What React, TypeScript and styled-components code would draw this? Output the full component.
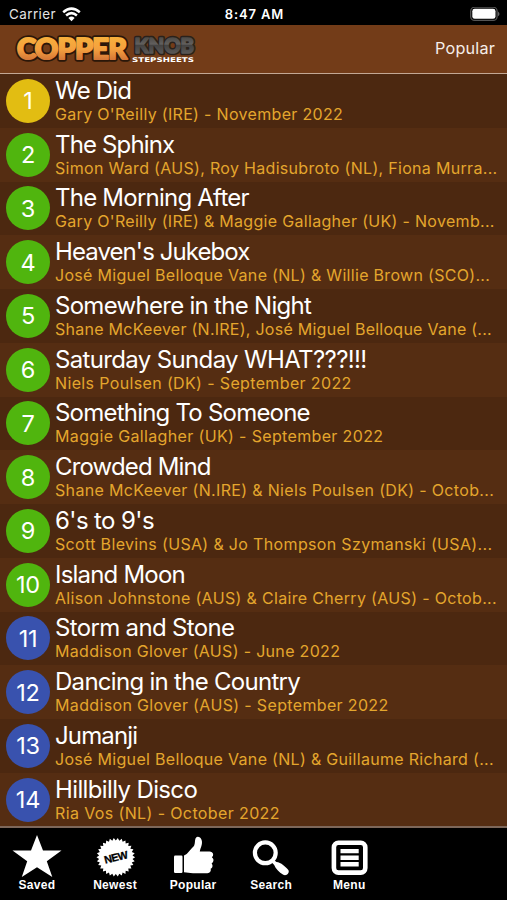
import React from "react";
import styled, { createGlobalStyle } from "styled-components";

const GlobalStyle = createGlobalStyle`
  body { margin: 0; background: #000; }
  *, *::before, *::after { box-sizing: border-box; }
`;

const Screen = styled.div`
  width: 507px;
  height: 900px;
  display: flex;
  flex-direction: column;
  overflow: hidden;
  background: #000;
  color: #fff;
  font-family: Inter, "Liberation Sans", sans-serif;
`;

const StatusBar = styled.div`
  flex: none;
  height: 25px;
  padding: 3px 7px 0 9px;
  display: grid;
  grid-template-columns: 1fr auto 1fr;
  align-items: center;
`;

const Carrier = styled.div`
  display: flex;
  align-items: center;
  gap: 6px;
  font-size: 13.4px;
  letter-spacing: 0.45px;
  color: #e4e4e4;
`;

const Clock = styled.div`
  font-size: 13px;
  font-weight: 600;
  letter-spacing: 0.85px;
`;

const BatterySlot = styled.div`
  display: flex;
  justify-content: flex-end;
`;

const Header = styled.header`
  flex: none;
  height: 49px;
  padding: 0 12px 3px 12px;
  display: flex;
  align-items: center;
  justify-content: space-between;
  background: #733c18;
  border-bottom: 1px solid #c3a894;
`;

const HeaderAction = styled.div`
  font-size: 16.2px;
  letter-spacing: 0.2px;
  color: #f6eee9;
`;

const List = styled.ol`
  flex: 1;
  min-height: 0;
  margin: 0;
  padding: 0;
  list-style: none;
  overflow: hidden;
  background: #4c2810;
`;

const Row = styled.li`
  height: 53.76px;
  padding-left: 6px;
  display: flex;
  align-items: center;
  gap: 5px;
  background: #4c2810;
  &:nth-child(even) { background: #552d12; }
`;

const Rank = styled.div<{ $color: string }>`
  flex: none;
  width: 44px;
  height: 44px;
  border-radius: 50%;
  display: flex;
  align-items: center;
  justify-content: center;
  font-size: 23.5px;
  letter-spacing: -0.2px;
  background: ${(p) => p.$color};
`;

const Details = styled.div`
  display: flex;
  flex-direction: column;
  padding-top: 0.5px;
  white-space: nowrap;
`;

const Title = styled.div<{ $tracking: number }>`
  font-size: 24px;
  line-height: 27px;
  letter-spacing: ${(p) => p.$tracking}px;
`;

const Credits = styled.div<{ $tracking: number }>`
  font-size: 16px;
  line-height: 21.4px;
  letter-spacing: ${(p) => p.$tracking}px;
  color: #e4a62d;
`;

const TabBar = styled.nav`
  flex: none;
  height: 74px;
  padding-top: 7px;
  display: flex;
  border-top: 2px solid #7d675a;
  background: #000;
`;

const Tab = styled.div`
  width: 78.1px;
  display: flex;
  flex-direction: column;
  align-items: center;
  &:first-child { width: 76px; padding-right: 2px; }
`;

const TabLabel = styled.div`
  font-family: "Liberation Sans", Arial, sans-serif;
  font-size: 12px;
  font-weight: 700;
  line-height: 14px;
  letter-spacing: 0.3px;
`;

const GOLD = "#e2bd12";
const GREEN = "#50b50e";
const BLUE = "#3952ae";

type Dance = { title: string; credits: string; color: string; titleTracking: number; creditsTracking: number };

const dances: Dance[] = [
  { title: "We Did", credits: "Gary O'Reilly (IRE) - November 2022", color: GOLD, titleTracking: -0.8, creditsTracking: 0.32 },
  { title: "The Sphinx", credits: "Simon Ward (AUS), Roy Hadisubroto (NL), Fiona Murra...", color: GREEN, titleTracking: -0.85, creditsTracking: 0.31 },
  { title: "The Morning After", credits: "Gary O'Reilly (IRE) & Maggie Gallagher (UK) - Novemb...", color: GREEN, titleTracking: -0.77, creditsTracking: 0.31 },
  { title: "Heaven's Jukebox", credits: "José Miguel Belloque Vane (NL) & Willie Brown (SCO)...", color: GREEN, titleTracking: -0.92, creditsTracking: 0.31 },
  { title: "Somewhere in the Night", credits: "Shane McKeever (N.IRE), José Miguel Belloque Vane (...", color: GREEN, titleTracking: -0.71, creditsTracking: 0.26 },
  { title: "Saturday Sunday WHAT???!!!", credits: "Niels Poulsen (DK) - September 2022", color: GREEN, titleTracking: -0.65, creditsTracking: 0.36 },
  { title: "Something To Someone", credits: "Maggie Gallagher (UK) - September 2022", color: GREEN, titleTracking: -0.78, creditsTracking: 0.35 },
  { title: "Crowded Mind", credits: "Shane McKeever (N.IRE) & Niels Poulsen (DK) - Octob...", color: GREEN, titleTracking: -0.85, creditsTracking: 0.33 },
  { title: "6's to 9's", credits: "Scott Blevins (USA) & Jo Thompson Szymanski (USA)...", color: GREEN, titleTracking: -0.6, creditsTracking: 0.34 },
  { title: "Island Moon", credits: "Alison Johnstone (AUS) & Claire Cherry (AUS) - Octob...", color: GREEN, titleTracking: -0.8, creditsTracking: 0.33 },
  { title: "Storm and Stone", credits: "Maddison Glover (AUS) - June 2022", color: BLUE, titleTracking: -0.67, creditsTracking: 0.32 },
  { title: "Dancing in the Country", credits: "Maddison Glover (AUS) - September 2022", color: BLUE, titleTracking: -0.71, creditsTracking: 0.35 },
  { title: "Jumanji", credits: "José Miguel Belloque Vane (NL) & Guillaume Richard (...", color: BLUE, titleTracking: -0.87, creditsTracking: 0.31 },
  { title: "Hillbilly Disco", credits: "Ria Vos (NL) - October 2022", color: BLUE, titleTracking: -0.63, creditsTracking: 0.38 },
];

const WifiIcon = () => (
  <svg width="19" height="15" viewBox="0 0 19 15" fill="none" stroke="#fff" strokeWidth="2.5">
    <path d="M1.2 5.3Q9.5-2 17.8 5.3" />
    <path d="M4.1 8.5Q9.5 3.8 14.9 8.5" />
    <path d="M9.5 14.2 6.4 10.9Q9.5 8.3 12.6 10.9Z" fill="#fff" stroke="none" />
  </svg>
);

const BatteryIcon = () => (
  <svg width="30" height="15" viewBox="0 0 30 15">
    <rect x="0.7" y="0.2" width="26.4" height="13.2" rx="4" fill="none" stroke="#555" strokeWidth="1.3" />
    <rect x="2.3" y="1.8" width="23.2" height="10" rx="2.4" fill="#fff" />
    <path d="M28 4.5Q31 6.9 28 9.3Z" fill="#666" />
  </svg>
);

const LogoText = styled.text`
  font-family: Lato, sans-serif;
  font-weight: 900;
  stroke-linejoin: round;
  paint-order: stroke;
`;

const Logo = () => (
  <svg width="188" height="38" viewBox="0 0 188 38">
    <defs>
      <linearGradient id="copper" x1="0" y1="0" x2="0" y2="1">
        <stop offset="0.15" stopColor="#f7b23c" />
        <stop offset="0.55" stopColor="#f4a03e" />
        <stop offset="0.9" stopColor="#cf7037" />
      </linearGradient>
      <linearGradient id="iron" x1="0" y1="0" x2="0" y2="1">
        <stop offset="0.2" stopColor="#4a4744" />
        <stop offset="0.5" stopColor="#62605e" />
        <stop offset="0.55" stopColor="#444342" />
        <stop offset="0.9" stopColor="#5b5958" />
      </linearGradient>
    </defs>
    <LogoText x="5" y="30" fontSize="29" textLength="110" lengthAdjust="spacing" fill="none" stroke="#2b1709" strokeWidth="5.6">COPPER</LogoText>
    <LogoText x="5" y="30" fontSize="29" textLength="110" lengthAdjust="spacing" fill="url(#copper)" stroke="url(#copper)" strokeWidth="2">COPPER</LogoText>
    <LogoText x="122.5" y="23.6" fontSize="21" textLength="59.5" lengthAdjust="spacingAndGlyphs" fill="none" stroke="#2a211b" strokeWidth="4.6">KNOB</LogoText>
    <LogoText x="122.5" y="23.6" fontSize="21" textLength="59.5" lengthAdjust="spacingAndGlyphs" fill="url(#iron)" stroke="url(#iron)" strokeWidth="1.6">KNOB</LogoText>
    <text x="120" y="33.2" fontFamily="DejaVu Sans, sans-serif" fontWeight="700" fontSize="6.4" textLength="62" lengthAdjust="spacingAndGlyphs" fill="#fff">STEPSHEETS</text>
  </svg>
);

const StarIcon = () => (
  <svg width="50" height="43" viewBox="0 0 50 43">
    <path d="M25 0 31 15.5 49.5 15.5 34.8 26.2 40.3 42 25 32.3 9.8 42 15.2 26.2 .5 15.5 19 15.5Z" fill="#fff" />
  </svg>
);

const sealPoints = Array.from({ length: 60 }, (_, i) => {
  const r = i % 2 ? 16.8 : 19.3;
  const a = (i * Math.PI) / 30;
  return `${(25.8 + r * Math.cos(a)).toFixed(2)},${(22.2 + r * Math.sin(a)).toFixed(2)}`;
}).join(" ");

const NewIcon = () => (
  <svg width="50" height="43" viewBox="0 0 50 43">
    <polygon points={sealPoints} fill="#fff" />
    <text x="26" y="26" textAnchor="middle" transform="rotate(-14 26 22.2)" fontFamily="Liberation Sans, sans-serif" fontWeight="700" fontSize="10.8" textLength="24" fill="#000" stroke="#000" strokeWidth="0.3">NEW</text>
  </svg>
);

const ThumbIcon = () => (
  <svg width="50" height="43" viewBox="0 0 50 43" fill="#fff">
    <rect x="6" y="20.5" width="8.5" height="17.5" rx="1.2" />
    <path d="M16 20.5C20 19 22 14.5 25.5 11.5 27.5 9.5 26.5 5 27.8 3 29.5.7 32.5 2.2 33.6 5 35 9 32.3 13 31.8 16.5H41.5C45.5 16.5 46.2 20.7 43.8 22.3 46.3 23.8 45.8 27.3 43.6 28.4 45.4 30.5 44.3 33.2 42.6 33.8 43.4 36 42 38.2 39.4 38.2H25C21.5 38.2 19 37.2 16 37.2Z" />
  </svg>
);

const SearchIcon = () => (
  <svg width="50" height="43" viewBox="0 0 50 43">
    <circle cx="19.3" cy="17.8" r="10.4" fill="none" stroke="#fff" strokeWidth="4.2" />
    <path d="M26.5 24 30.5 27C35 27.5 39.5 31.5 42.5 35.3 43.7 38.3 40.5 41.2 37.3 39.8 33 37 29.6 34 28.2 30L24.5 26Z" fill="#fff" />
  </svg>
);

const MenuIcon = () => (
  <svg width="50" height="43" viewBox="0 0 50 43">
    <rect x="9.9" y="7.8" width="31.4" height="29.8" rx="4.5" fill="none" stroke="#fff" strokeWidth="4.6" />
    <path d="M16.5 16.1H34.7M16.5 22.7H34.7M16.5 29.3H34.7" stroke="#fff" strokeWidth="4.4" />
  </svg>
);

const tabs = [
  { label: "Saved", Icon: StarIcon },
  { label: "Newest", Icon: NewIcon },
  { label: "Popular", Icon: ThumbIcon },
  { label: "Search", Icon: SearchIcon },
  { label: "Menu", Icon: MenuIcon },
];

export default function App() {
  return (
    <>
      <GlobalStyle />
      <Screen>
        <StatusBar>
          <Carrier>
            Carrier
            <WifiIcon />
          </Carrier>
          <Clock>8:47 AM</Clock>
          <BatterySlot>
            <BatteryIcon />
          </BatterySlot>
        </StatusBar>
        <Header>
          <Logo />
          <HeaderAction>Popular</HeaderAction>
        </Header>
        <List>
          {dances.map((d, i) => (
            <Row key={d.title}>
              <Rank $color={d.color}>{i + 1}</Rank>
              <Details>
                <Title $tracking={d.titleTracking}>{d.title}</Title>
                <Credits $tracking={d.creditsTracking}>{d.credits}</Credits>
              </Details>
            </Row>
          ))}
        </List>
        <TabBar>
          {tabs.map(({ label, Icon }) => (
            <Tab key={label}>
              <Icon />
              <TabLabel>{label}</TabLabel>
            </Tab>
          ))}
        </TabBar>
      </Screen>
    </>
  );
}
